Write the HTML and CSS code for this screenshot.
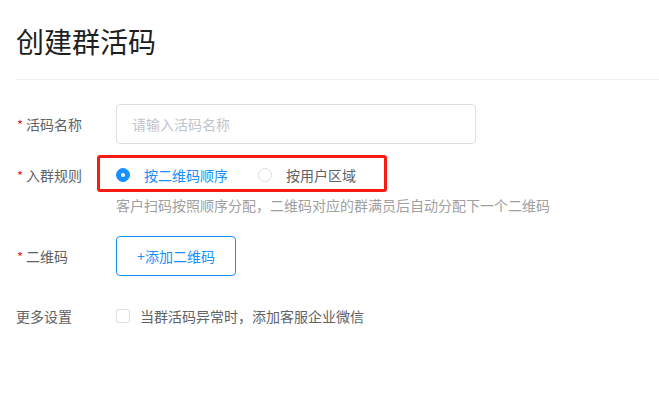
FILE: index.html
```html
<!DOCTYPE html>
<html lang="zh">
<head>
<meta charset="utf-8">
<title>创建群活码</title>
<link rel="stylesheet" href="styles.css">
</head>
<body>
<div class="page">
  <div class="header">
    <h1 class="title">创建群活码</h1>
  </div>
  <div class="form">
    <div class="row row-name">
      <div class="label"><span class="req">*</span>活码名称</div>
      <div class="control">
        <input class="input" type="text" placeholder="请输入活码名称">
      </div>
    </div>
    <div class="row row-rule">
      <div class="label"><span class="req">*</span>入群规则</div>
      <div class="control">
        <div class="radios">
          <label class="radio checked"><span class="radio-dot"></span><span class="radio-text">按二维码顺序</span></label>
          <label class="radio"><span class="radio-dot"></span><span class="radio-text">按用户区域</span></label>
        </div>
      </div>
    </div>
    <div class="hint">客户扫码按照顺序分配，二维码对应的群满员后自动分配下一个二维码</div>
    <div class="row row-qr">
      <div class="label"><span class="req">*</span>二维码</div>
      <div class="control">
        <button class="btn-add" type="button">+添加二维码</button>
      </div>
    </div>
    <div class="row row-more">
      <div class="label">更多设置</div>
      <div class="control">
        <label class="check"><span class="check-box"></span><span class="check-text">当群活码异常时，添加客服企业微信</span></label>
      </div>
    </div>
  </div>
</div>
</body>
</html>
```

FILE: styles.css
```css
* { box-sizing: border-box; }
html, body {
  margin: 0;
  padding: 0;
  background: #fff;
}
body {
  font-family: "Noto Sans CJK SC", "Noto Sans", sans-serif;
  font-size: 14px;
  color: #606266;
}
.page {
  padding-left: 16px;
}
.header {
  padding-top: 21px;
  padding-bottom: 18px;
  border-bottom: 1px solid #ebeef5;
}
.title {
  margin: 0;
  font-size: 28px;
  font-weight: 400;
  line-height: 40px;
  color: #1f1f1f;
}
.form {
  padding-top: 24px;
}
.row {
  display: flex;
  align-items: center;
}
.label {
  width: 100px;
  flex: none;
  line-height: 20px;
  color: #606266;
}
.req {
  color: #f5222d;
  display: inline-block;
  width: 10px;
  padding-left: 1px;
  font-size: 13px;
}
.control {
  display: flex;
  align-items: center;
}
.row-name { height: 40px; margin-bottom: 15px; }
.input {
  width: 360px;
  height: 40px;
  border: 1px solid #dcdfe6;
  border-radius: 4px;
  padding: 0 15px;
  font-family: inherit;
  font-size: 14px;
  color: #606266;
  outline: none;
}
.input::placeholder { color: #c0c4cc; }

.row-rule { height: 32px; }
.radios {
  position: relative;
  display: flex;
  align-items: center;
}
.radios::after {
  content: "";
  position: absolute;
  left: -19px;
  right: -31px;
  top: -10px;
  bottom: -7px;
  border: 3px solid #fa1a12;
  border-radius: 3px;
  pointer-events: none;
}
.radio {
  display: flex;
  align-items: center;
  margin-right: 30px;
  line-height: 20px;
  color: #606266;
}
.radio:last-child { margin-right: 0; }
.radio-dot {
  width: 14px;
  height: 14px;
  border-radius: 50%;
  border: 1px solid #dcdfe6;
  background: #fff;
  margin-right: 14px;
  position: relative;
}
.radio.checked .radio-dot {
  background: #1890ff;
  border-color: #1890ff;
}
.radio.checked .radio-dot::after {
  content: "";
  position: absolute;
  left: 50%;
  top: 50%;
  width: 4px;
  height: 4px;
  margin: -2px 0 0 -2px;
  border-radius: 50%;
  background: #fff;
}
.radio.checked .radio-text { color: #1890ff; }

.hint {
  margin-top: 4px;
  margin-left: 100px;
  line-height: 20px;
  color: #a0a0a0;
}
.row-qr { margin-top: 21px; height: 40px; }
.btn-add {
  width: 120px;
  height: 40px;
  border: 1px solid #1890ff;
  border-radius: 4px;
  background: #fff;
  color: #1890ff;
  font-family: inherit;
  font-size: 14px;
  padding: 0;
  cursor: pointer;
}
.row-more { margin-top: 20px; height: 40px; }
.check {
  display: flex;
  align-items: center;
  line-height: 20px;
}
.check-box {
  width: 14px;
  height: 14px;
  border: 1px solid #dcdfe6;
  border-radius: 2px;
  margin-right: 10px;
  background: #fff;
}
.check-text { color: #606266; }
```
